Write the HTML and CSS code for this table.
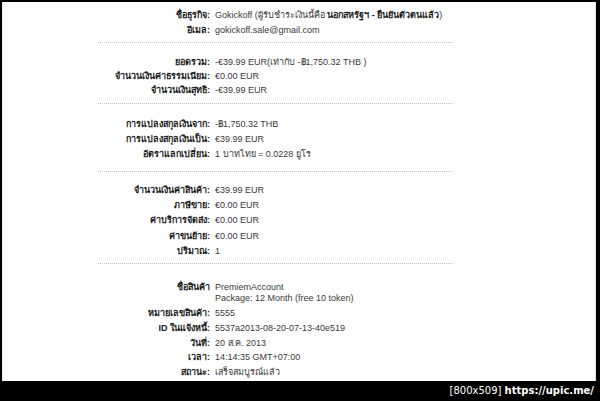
FILE: index.html
```html
<!DOCTYPE html>
<html lang="th">
<head>
<meta charset="utf-8">
<title>รายละเอียดการชำระเงิน</title>
<link rel="stylesheet" href="styles.css">
</head>
<body>
<div class="frame">
  <div class="sheet">
    <div class="details">
      <section class="sec s1">
        <div class="row"><div class="lbl">ชื่อธุรกิจ:</div><div class="val">Gokickoff (ผู้รับชำระเงินนี้คือ <b>นอกสหรัฐฯ - ยืนยันตัวตนแล้ว</b>)</div></div>
        <div class="row"><div class="lbl">อีเมล:</div><div class="val">gokickoff.sale@gmail.com</div></div>
      </section>
      <section class="sec s2">
        <div class="row"><div class="lbl">ยอดรวม:</div><div class="val">-€39.99 EUR(เท่ากับ -฿1,750.32 THB )</div></div>
        <div class="row"><div class="lbl">จำนวนเงินค่าธรรมเนียม:</div><div class="val">€0.00 EUR</div></div>
        <div class="row"><div class="lbl">จำนวนเงินสุทธิ:</div><div class="val">-€39.99 EUR</div></div>
      </section>
      <section class="sec s3">
        <div class="row"><div class="lbl">การแปลงสกุลเงินจาก:</div><div class="val">-฿1,750.32 THB</div></div>
        <div class="row"><div class="lbl">การแปลงสกุลเงินเป็น:</div><div class="val">€39.99 EUR</div></div>
        <div class="row"><div class="lbl">อัตราแลกเปลี่ยน:</div><div class="val">1 บาทไทย = 0.0228 ยูโร</div></div>
      </section>
      <section class="sec s4">
        <div class="row"><div class="lbl">จำนวนเงินค่าสินค้า:</div><div class="val">€39.99 EUR</div></div>
        <div class="row"><div class="lbl">ภาษีขาย:</div><div class="val">€0.00 EUR</div></div>
        <div class="row"><div class="lbl">ค่าบริการจัดส่ง:</div><div class="val">€0.00 EUR</div></div>
        <div class="row"><div class="lbl">ค่าขนย้าย:</div><div class="val">€0.00 EUR</div></div>
        <div class="row"><div class="lbl">ปริมาณ:</div><div class="val">1</div></div>
      </section>
      <section class="sec s5">
        <div class="row"><div class="lbl">ชื่อสินค้า</div><div class="val">PremiemAccount<br>Package: 12 Month (free 10 token)</div></div>
        <div class="row"><div class="lbl">หมายเลขสินค้า:</div><div class="val">5555</div></div>
        <div class="row"><div class="lbl">ID ในแจ้งหนี้:</div><div class="val">5537a2013-08-20-07-13-40e519</div></div>
        <div class="row"><div class="lbl">วันที่:</div><div class="val">20 ส.ค. 2013</div></div>
        <div class="row"><div class="lbl">เวลา:</div><div class="val">14:14:35 GMT+07:00</div></div>
        <div class="row"><div class="lbl">สถานะ:</div><div class="val">เสร็จสมบูรณ์แล้ว</div></div>
      </section>
    </div>
  </div>
  <div class="stamp"><span class="size">[800x509]</span> <span class="site">https://upic.me/</span></div>
</div>
</body>
</html>
```
FILE: styles.css
```css
* { box-sizing: border-box; }
html, body { margin: 0; padding: 0; }
body {
  background: #000;
  width: 600px;
  height: 401px;
  overflow: hidden;
  font-family: "Liberation Sans", Arial, sans-serif;
}
.frame {
  display: flex;
  flex-direction: column;
  height: 401px;
  padding: 2px 4px 0 2px;
}
.sheet {
  background: #fff;
  height: 379px;
  border-right: 1px solid #e6e6e6;
  border-left: 1px solid #eeeeee;
}
.details {
  width: 355px;
  margin-left: 95px;
  font-size: 9px;
  color: #3a3a3a;
}
.sec {
  border-bottom: 1px dotted #c4c4c4;
}
.sec.s5 { border-bottom: none; }
.row {
  display: grid;
  grid-template-columns: 112px 1fr;
  column-gap: 5px;
  line-height: 11px;
  padding: 2px 0;
}
.lbl {
  text-align: right;
  font-weight: bold;
  color: #1a1a1a;
  white-space: nowrap;
}
.val { white-space: nowrap; }
.val b { font-weight: bold; color: #1a1a1a; }
.s1 { padding: 6px 0 4px; }
.s2 { padding: 12px 0 6px; }
.s2 .row { padding: 1.5px 0; }
.s3 { padding: 13px 0 9px; }
.s4 { padding: 10.5px 0 4px; }
.s4 .row { padding: 2.2px 0; }
.s5 { padding: 16px 0 0; }
.s5 .row { padding: 1.9px 0; }
.stamp {
  height: 20px;
  text-align: right;
  color: #fff;
  font-family: "DejaVu Sans", sans-serif;
  font-size: 10px;
  line-height: 20px;
  padding-right: 2px;
}
.stamp .site { font-weight: bold; }
```
